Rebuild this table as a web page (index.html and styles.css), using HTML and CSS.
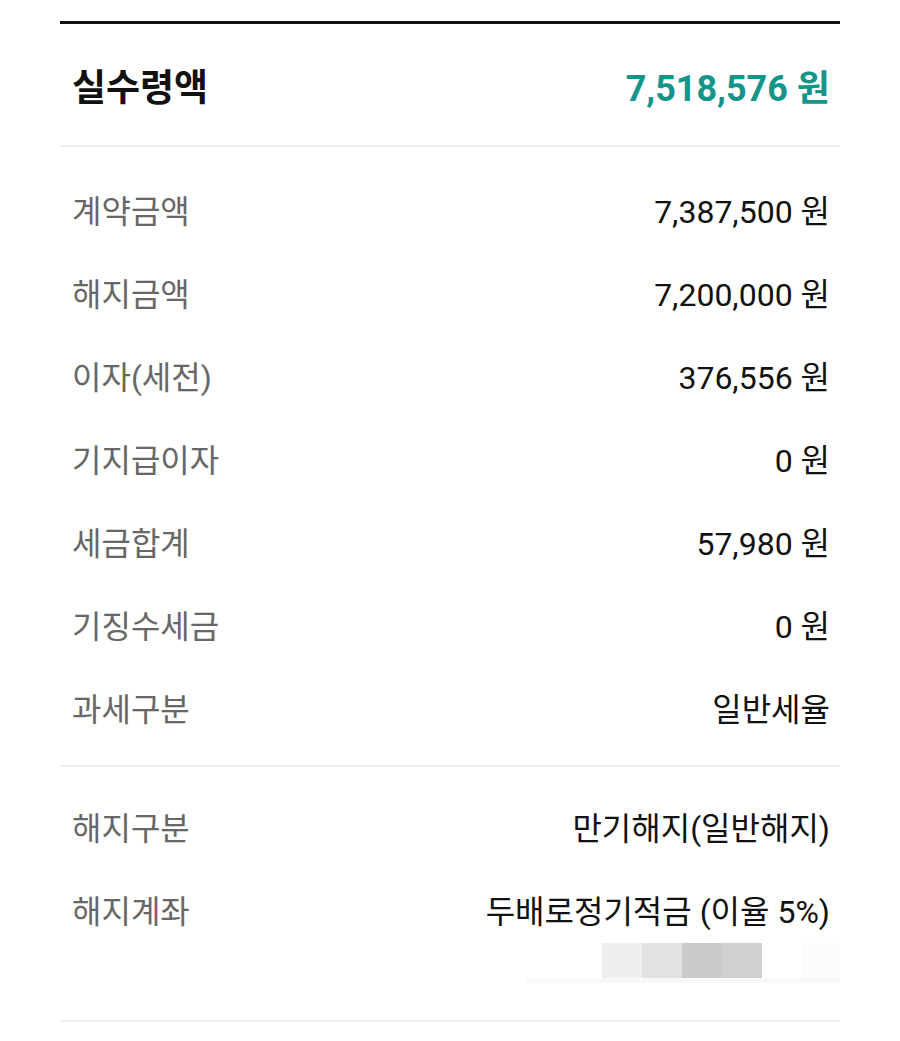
FILE: index.html
```html
<!DOCTYPE html>
<html lang="ko">
<head>
<meta charset="utf-8">
<link rel="stylesheet" href="styles.css">
</head>
<body>
<div class="wrap">
  <div class="card">
    <div class="head">
      <span class="head-label">실수령액</span>
      <span class="head-value">7,518,576 원</span>
    </div>
    <div class="section first">
      <div class="row"><span class="label">계약금액</span><span class="value">7,387,500 원</span></div>
      <div class="row"><span class="label">해지금액</span><span class="value">7,200,000 원</span></div>
      <div class="row"><span class="label">이자(세전)</span><span class="value">376,556 원</span></div>
      <div class="row"><span class="label">기지급이자</span><span class="value">0 원</span></div>
      <div class="row"><span class="label">세금합계</span><span class="value">57,980 원</span></div>
      <div class="row"><span class="label">기징수세금</span><span class="value">0 원</span></div>
      <div class="row"><span class="label">과세구분</span><span class="value">일반세율</span></div>
    </div>
    <div class="section second">
      <div class="row"><span class="label">해지구분</span><span class="value">만기해지(일반해지)</span></div>
      <div class="row"><span class="label">해지계좌</span><span class="value">두배로정기적금 (이율 5%)</span></div>
      <div class="masked">
        <div class="blocks">
          <span class="b b1"></span><span class="b b2"></span><span class="b b3"></span><span class="b b4"></span><span class="b b5"></span><span class="b b6"></span>
        </div>
        <div class="mask-line"></div>
      </div>
    </div>
  </div>
</div>
</body>
</html>
```
FILE: styles.css
```css
* { box-sizing: border-box; }
html, body { margin: 0; padding: 0; background: #fff; }
body {
  font-family: Roboto, "Noto Sans CJK KR", sans-serif;
  width: 900px;
  height: 1041px;
  overflow: hidden;
}
.wrap { padding: 21px 60px 0; }
.card { border-top: 3px solid #111; }
.head {
  height: 123px;
  display: flex;
  align-items: center;
  justify-content: space-between;
  padding: 0 10px 0 12px;
  border-bottom: 2px solid #eeeeee;
}
.head-label {
  font-size: 37px;
  font-weight: 700;
  color: #111;
}
.head-value {
  font-size: 36px;
  font-weight: 700;
  color: #15958a;
}
.section { border-bottom: 2px solid #eeeeee; }
.section.first { padding: 20px 0 17px; }
.section.second { padding: 17px 0 37px; }
.row {
  height: 83px;
  display: flex;
  align-items: center;
  justify-content: space-between;
  padding: 0 10px 0 12px;
}
.label { font-size: 32px; color: #676767; }
.value { font-size: 32px; color: #111; }
.masked {
  display: flex;
  flex-direction: column;
  align-items: flex-end;
  margin-top: -7px;
}
.blocks { display: flex; height: 35px; }
.b { width: 40px; height: 35px; display: block; }
.b1 { background: #efefef; }
.b2 { background: #e3e3e3; }
.b3 { background: #cbcbcb; }
.b4 { background: #d1d1d1; }
.b5 { background: #fff; }
.b6 { background: #fcfcfc; width: 38px; }
.mask-line { width: 313px; height: 5px; background: #f8f8f8; }
```
